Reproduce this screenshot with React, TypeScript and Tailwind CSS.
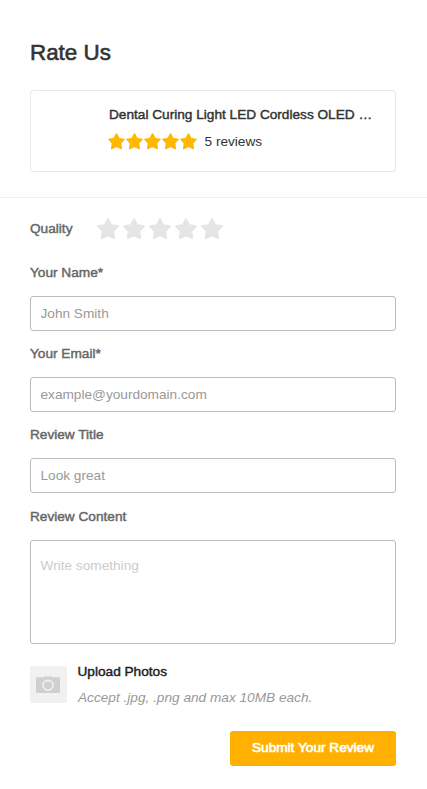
import React from "react";

const medium = "[-webkit-text-stroke:0.45px_currentColor]";

function Star({ className }: { className: string }) {
  return (
    <svg viewBox="0 0 24 24" className={className} fill="currentColor" stroke="currentColor" strokeWidth="2" strokeLinejoin="round">
      <path d="M12 1.3 L15.5 7.8 L22.8 9 L17.8 14.3 L18.8 22 L12 18.9 L5.2 22 L6.2 14.3 L1.2 9 L8.5 7.8 Z" />
    </svg>
  );
}

function Field({ label, placeholder, className }: { label: string; placeholder: string; className: string }) {
  return (
    <label className={`block ${className}`}>
      <span className={`block h-5 leading-5 text-[#666] ${medium}`}>{label}</span>
      <input
        placeholder={placeholder}
        className="mt-[13px] block h-[35px] w-full rounded-[3px] border border-[#bbb] bg-white px-[9.5px] text-[13.65px] placeholder:text-[#999] placeholder:opacity-100"
      />
    </label>
  );
}

export default function App() {
  return (
    <main className="h-[789px] w-full overflow-hidden bg-white text-[13.65px] [font-family:'Liberation_Sans',Arial,sans-serif]">
      <header className="h-[198px] border-b border-[#eee] pt-[37px] pr-[31px] pl-[30px]">
        <h1 className="h-8 text-[22.4px] leading-8 text-[#333] [-webkit-text-stroke:0.6px_currentColor]">Rate Us</h1>
        <section className="mt-[21px] h-[82px] rounded-[3px] border border-[#e8e8e8] pt-[14px] pl-[78px]">
          <h2 className={`h-5 leading-5 whitespace-nowrap text-[#333] ${medium}`}>
            Dental Curing Light LED Cordless OLED …
          </h2>
          <div className="mt-[6px] flex h-5 items-center">
            <div className="mt-px -ml-[0.6px] flex gap-[1px] text-[#ffb800]">
              {[0, 1, 2, 3, 4].map((n) => <Star key={n} className="h-[17px] w-[17px]" />)}
            </div>
            <span className="ml-[7.1px] pt-[2px] leading-5 text-[#333]">5 reviews</span>
          </div>
        </section>
      </header>
      <form className="pr-[31px] pl-[30px]">
        <div className="flex h-[62px] items-center">
          <span className={`w-[67px] leading-5 text-[#666] ${medium}`}>Quality</span>
          <div className="-mt-px flex gap-[4px] text-[#e5e5e5]">
            {[0, 1, 2, 3, 4].map((n) => <Star key={n} className="h-[22px] w-[22px]" />)}
          </div>
        </div>
        <Field label="Your Name*" placeholder="John Smith" className="mt-[3px]" />
        <Field label="Your Email*" placeholder="example@yourdomain.com" className="mt-[13px]" />
        <Field label="Review Title" placeholder="Look great" className="mt-[13px]" />
        <label className="mt-[14px] block">
          <span className={`block h-5 leading-5 text-[#666] ${medium}`}>Review Content</span>
          <textarea
            placeholder="Write something"
            className="mt-[13px] block h-[104px] w-full resize-none rounded-[3px] border border-[#bbb] px-[9.5px] pt-[15px] leading-5 placeholder:text-[#ccc] placeholder:opacity-100"
          />
        </label>
        <div className="mt-[18px] flex h-[47px]">
          <div className="mt-[4px] flex h-[37px] w-[37px] justify-center bg-[#f1f1f1] pt-[10px] pr-px">
            <svg viewBox="0 0 24 18" className="h-[18px] w-6">
              <path d="M1 1.2H7.8L8.6 .2H15.4L16.2 1.2H23Q24 1.2 24 2.2V16Q24 17 23 17H1Q0 17 0 16V2.2Q0 1.2 1 1.2Z" fill="#d0d0d0" />
              <circle cx="12" cy="9.3" r="4.9" fill="none" stroke="#f1f1f1" strokeWidth="1.6" />
            </svg>
          </div>
          <div className="ml-[10.5px]">
            <p className={`leading-5 text-[#222] ${medium}`}>Upload Photos</p>
            <p className="mt-[6px] pl-[0.5px] leading-5 text-[#999] italic">Accept .jpg, .png and max 10MB each.</p>
          </div>
        </div>
        <button type="button" className="mt-[22px] ml-auto block h-[35px] w-[166px] rounded-[3px] bg-[#ffb000] pb-px text-white [-webkit-text-stroke:0.7px_currentColor]">
          Submit Your Review
        </button>
      </form>
    </main>
  );
}
